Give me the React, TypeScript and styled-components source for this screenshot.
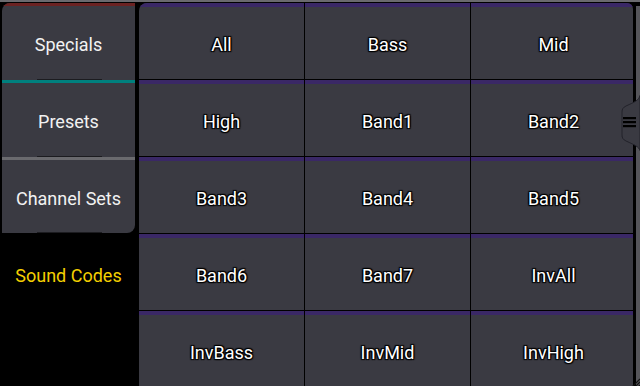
import styled, { createGlobalStyle } from "styled-components";

const Global = createGlobalStyle`
  html, body {
    margin: 0;
    padding: 0;
    background: #000;
    width: 640px;
    height: 386px;
    overflow: hidden;
    font-family: Roboto, "Liberation Sans", sans-serif;
  }
`;

const Screen = styled.div`
  position: relative;
  width: 640px;
  height: 386px;
  display: flex;
  flex-direction: column;
  background: #000;
  overflow: hidden;
`;

const TopBar = styled.div`
  height: 2px;
  background: #6a6a6e;
  border-bottom: 1px solid #000;
  flex: none;
`;

const Body = styled.div`
  flex: 1;
  display: flex;
  padding-left: 2px;
  gap: 4px;
  min-height: 0;
`;

const Side = styled.div`
  width: 133px;
  flex: none;
  display: flex;
  flex-direction: column;
`;

const SideButtons = styled.div`
  display: flex;
  flex-direction: column;
  background: #3a3a42;
  border-radius: 8px 0 8px 0;
  overflow: hidden;
`;

const SideButton = styled.div<{ $line: string; $h: number }>`
  position: relative;
  height: ${({ $h }) => $h}px;
  box-sizing: border-box;
  border-top: 3px solid ${({ $line }) => $line};
  display: flex;
  align-items: center;
  justify-content: center;
  color: #f2f2f2;
  font-size: 18px;
  padding-top: 3px;

  &::after {
    content: "";
    position: absolute;
    left: 35px;
    right: 33px;
    bottom: 0;
    height: 1px;
    background: #1c1c20;
  }
`;

const SoundCodes = styled.div`
  height: 84px;
  display: flex;
  align-items: center;
  justify-content: center;
  color: #f4d000;
  font-size: 18px;
  padding-bottom: 2px;
`;

const Grid = styled.div`
  width: 497px;
  display: grid;
  grid-template-columns: repeat(3, 165px);
  grid-auto-rows: 76px;
  gap: 1px;
  background: #000;
  border-radius: 8px 6px 0 0;
  overflow: hidden;
  align-content: start;
`;

const Cell = styled.div`
  box-sizing: border-box;
  background: #3a3a42;
  border-top: 4px solid #3a2866;
  display: flex;
  align-items: center;
  justify-content: center;
  color: #fff;
  font-size: 18px;
  padding-top: 3px;
  text-shadow:
    -1px -1px 1px #000, 1px -1px 1px #000, -1px 1px 1px #000, 1px 1px 1px #000,
    0 0 2px #000;
`;

const ScrollTrack = styled.div`
  width: 4px;
  flex: none;
  margin-left: -1px;
  background: #55555a;
  margin-top: 3px;
`;

const Handle = styled.div`
  position: absolute;
  right: 0;
  top: 95px;
  width: 20px;
  height: 56px;
`;

const Grip = styled.div`
  position: absolute;
  right: 0;
  bottom: 0;
  width: 12px;
  height: 12px;
`;

const sideItems = [
  { label: "Specials", line: "#6b2222", h: 77 },
  { label: "Presets", line: "#00807e", h: 77 },
  { label: "Channel Sets", line: "#6a6a6e", h: 76 },
];

const cells = [
  "All", "Bass", "Mid",
  "High", "Band1", "Band2",
  "Band3", "Band4", "Band5",
  "Band6", "Band7", "InvAll",
  "InvBass", "InvMid", "InvHigh",
];

export default function App() {
  return (
    <Screen>
      <Global />
      <TopBar />
      <Body>
        <Side>
          <SideButtons>
            {sideItems.map((s) => (
              <SideButton key={s.label} $line={s.line} $h={s.h}>
                {s.label}
              </SideButton>
            ))}
          </SideButtons>
          <SoundCodes>Sound Codes</SoundCodes>
        </Side>
        <Grid>
          {cells.map((c) => (
            <Cell key={c}>{c}</Cell>
          ))}
        </Grid>
        <ScrollTrack />
      </Body>

      {/* side drawer tab */}
      <Handle>
        <svg width="20" height="56" viewBox="0 0 20 56">
          <path
            d="M20 0.5 C19 5 15 7 6 11 C3 12.5 2 14 2 17 L2 40 C2 43 3 44.5 6 46 C15 50 19 52 20 55.5 Z"
            fill="#3a3a42"
            stroke="#22222a"
            strokeWidth="1"
          />
          <rect x="3" y="22" width="13" height="2.2" fill="#000" />
          <rect x="3" y="26" width="13" height="2.2" fill="#000" />
          <rect x="3" y="30" width="13" height="2.2" fill="#000" />
        </svg>
      </Handle>

      {/* resize grip */}
      <Grip>
        <svg width="12" height="12" viewBox="0 0 12 12">
          <path d="M12 2 L2 12 M12 5 L5 12 M12 8 L8 12" stroke="#111" strokeWidth="1.2" />
        </svg>
      </Grip>
    </Screen>
  );
}
